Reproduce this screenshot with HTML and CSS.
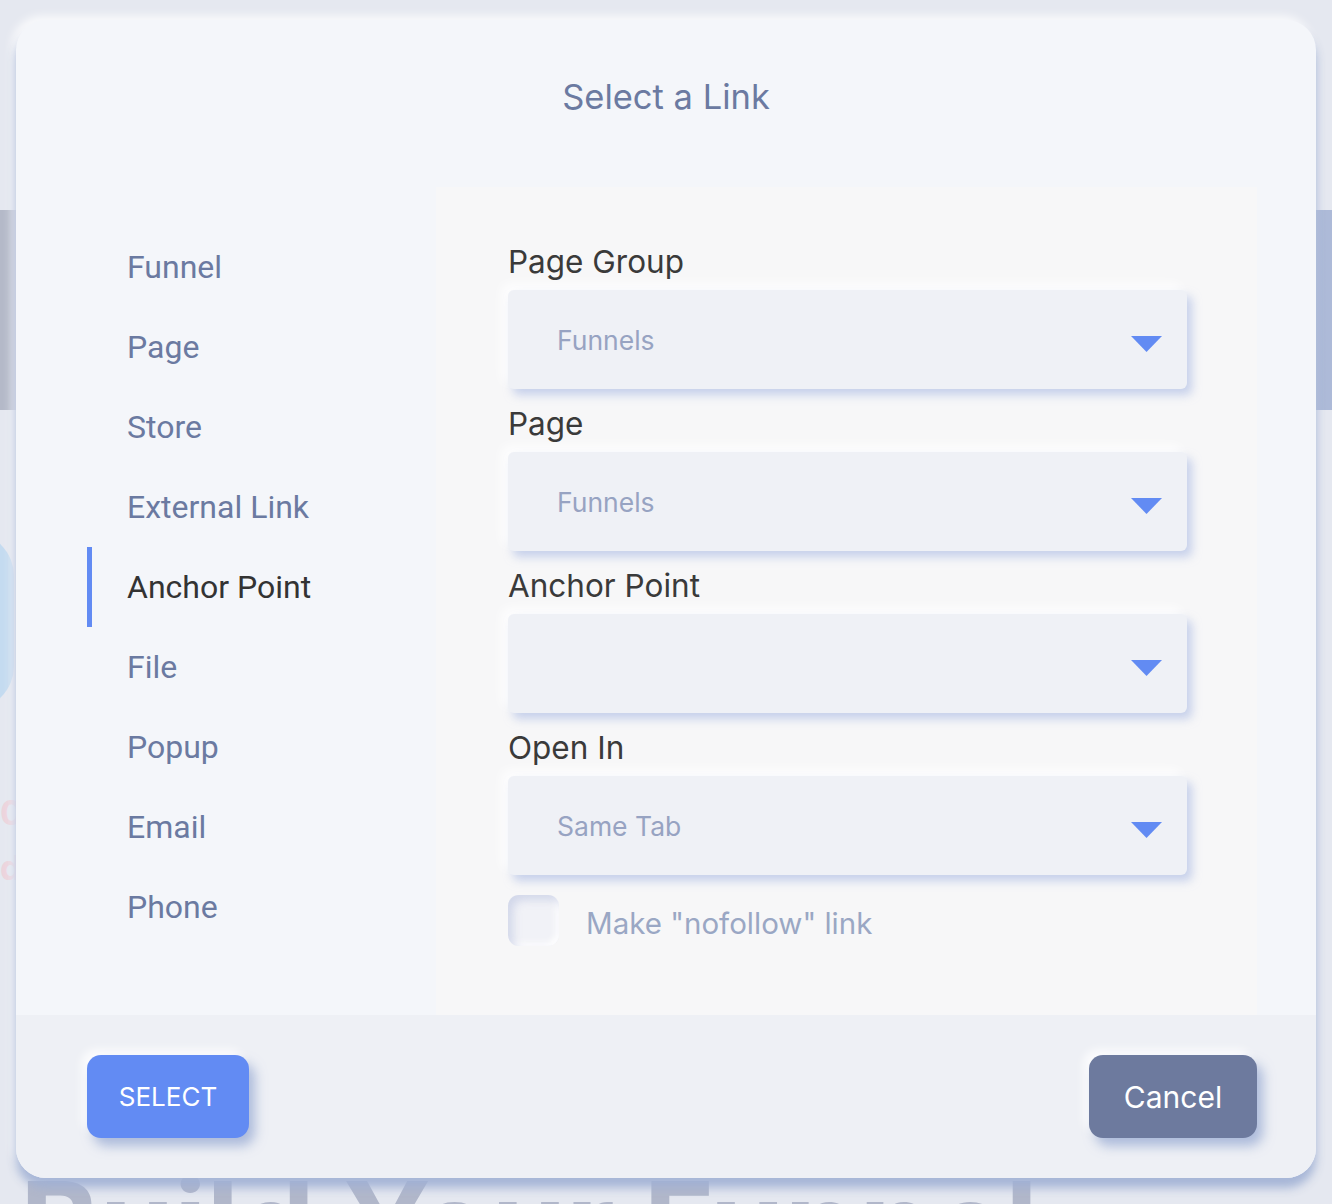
FILE: index.html
```html
<!DOCTYPE html>
<html lang="en">
<head>
    <meta charset="UTF-8">
    <title>Select a Link</title>
    <link rel="stylesheet" href="styles.css">
</head>
<body>
    <!-- page behind the dialog -->
    <div class="page">
        <div class="hero"></div>
        <div class="feature">
            <div class="bubble"></div>
        </div>
        <div class="stats">
            <p class="stat-num">0</p>
            <p class="stat-label">da</p>
        </div>
        <h1 class="headline">Build Your Funnel</h1>
    </div>

    <div class="modal">
        <div class="modal-header">
            <h2>Select a Link</h2>
        </div>

        <div class="modal-body">
            <ul class="link-types">
                <li>Funnel</li>
                <li>Page</li>
                <li>Store</li>
                <li>External Link</li>
                <li class="active">Anchor Point</li>
                <li>File</li>
                <li>Popup</li>
                <li>Email</li>
                <li>Phone</li>
            </ul>

            <div class="link-form">
                <label class="field-label">Page Group</label>
                <div class="select">
                    <span>Funnels</span>
                    <svg class="caret" width="31" height="16" viewBox="0 0 31 16"><path d="M0 0H31L15.5 16Z" fill="#628bf3"/></svg>
                </div>

                <label class="field-label">Page</label>
                <div class="select">
                    <span>Funnels</span>
                    <svg class="caret" width="31" height="16" viewBox="0 0 31 16"><path d="M0 0H31L15.5 16Z" fill="#628bf3"/></svg>
                </div>

                <label class="field-label">Anchor Point</label>
                <div class="select">
                    <span></span>
                    <svg class="caret" width="31" height="16" viewBox="0 0 31 16"><path d="M0 0H31L15.5 16Z" fill="#628bf3"/></svg>
                </div>

                <label class="field-label">Open In</label>
                <div class="select">
                    <span>Same Tab</span>
                    <svg class="caret" width="31" height="16" viewBox="0 0 31 16"><path d="M0 0H31L15.5 16Z" fill="#628bf3"/></svg>
                </div>

                <div class="nofollow">
                    <div class="checkbox"></div>
                    <span>Make "nofollow" link</span>
                </div>
            </div>
        </div>

        <div class="modal-footer">
            <button class="btn btn-select">SELECT</button>
            <button class="btn btn-cancel">Cancel</button>
        </div>
    </div>
</body>
</html>
```

FILE: styles.css
```css
body {
    margin: 0;
    padding: 0;
    background-color: #e5e8f0;
    font-family: 'Inter', 'Liberation Sans', sans-serif;
}

/* background page */
.page {
    padding-top: 210px;
    height: 1204px;
    box-sizing: border-box;
    overflow: hidden;
}
.hero {
    height: 200px;
    background: linear-gradient(90deg, #b4b9c8 0%, #b7bdcc 50%, #adbad8 100%);
}
.feature {
    height: 300px;
    padding-top: 122px;
    box-sizing: border-box;
}
.bubble {
    width: 200px;
    height: 178px;
    margin-left: -186px;
    border-radius: 44px;
    background-color: #c4dbf0;
}
.stats {
    margin-top: 83px;
}
.stats p {
    margin: 0;
    color: #ecd3dc;
    font-size: 34px;
    line-height: 40px;
    font-weight: bold;
}
.stat-label {
    margin-top: 15px !important;
}
.headline {
    margin: 277px 0 0 20px;
    font-size: 120px;
    line-height: 120px;
    color: #b1b7ca;
    font-weight: bold;
}

/* dialog */
.modal {
    position: absolute;
    top: 20px;
    left: 16px;
    width: 1300px;
    height: 1158px;
    background-color: #f4f6fa;
    border-radius: 30px;
    overflow: hidden;
    display: flex;
    flex-direction: column;
    box-shadow: 0 10px 10px rgba(160,176,212,0.9), -4px -4px 10px rgba(255,255,255,0.8);
}
.modal-header {
    height: 167px;
    flex-shrink: 0;
}
.modal-header h2 {
    margin: 0;
    padding-top: 57px;
    text-align: center;
    font-size: 34.5px;
    font-weight: 400;
    line-height: 40px;
    color: #6b7aa1;
}

.modal-body {
    flex: 1;
    display: flex;
}

.link-types {
    list-style: none;
    margin: 0;
    padding: 40px 0 0 71px;
    width: 420px;
    box-sizing: border-box;
}
.link-types li {
    height: 80px;
    line-height: 80px;
    padding-left: 35px;
    border-left: 5px solid transparent;
    font-family: 'Roboto', 'Liberation Sans', sans-serif;
    font-size: 32px;
    color: #6b7aa1;
}
.link-types li.active {
    border-left-color: #628bf3;
    color: #333;
}

.link-form {
    width: 821px;
    background-color: #f7f7f8;
    padding: 56px 0 0 72px;
    box-sizing: border-box;
}
.field-label {
    display: block;
    font-size: 31.5px;
    line-height: 38px;
    color: #3a3a3a;
    margin-bottom: 9px;
}
.select {
    width: 679px;
    height: 99px;
    background-color: #eff1f6;
    border-radius: 6px;
    display: flex;
    align-items: center;
    justify-content: space-between;
    padding: 0 25px 0 49px;
    box-sizing: border-box;
    margin-bottom: 16px;
    box-shadow: 5px 6px 10px rgba(172,188,228,0.65), -6px -6px 12px rgba(255,255,255,0.9);
}
.select span {
    font-size: 26.5px;
    color: #97a3c2;
}
.caret {
    margin-top: 8px;
}

.nofollow {
    display: flex;
    align-items: center;
    gap: 27px;
    margin-top: 20px;
}
.checkbox {
    width: 51px;
    height: 51px;
    border-radius: 11px;
    background-color: #f1f2f7;
    box-shadow: inset 5px 5px 8px rgba(196,204,228,0.7), inset -3px -3px 6px #fff;
}
.nofollow span {
    font-size: 29.5px;
    color: #9aa7c4;
    margin-top: 4px;
}

.modal-footer {
    height: 163px;
    flex-shrink: 0;
    background-color: #eef0f5;
    display: flex;
    justify-content: space-between;
    align-items: flex-start;
    padding: 40px 59px 0 71px;
    box-sizing: border-box;
}
.btn {
    height: 83px;
    border: none;
    border-radius: 14px;
    color: white;
    font-family: 'Inter', 'Liberation Sans', sans-serif;
    cursor: pointer;
    box-shadow: 6px 8px 12px rgba(150,168,210,0.75), -5px -5px 10px rgba(255,255,255,0.9);
}
.btn-select {
    width: 162px;
    font-size: 26px;
    background-color: #628bf3;
}
.btn-cancel {
    width: 168px;
    font-size: 30px;
    background-color: #6d7a9e;
}
```
